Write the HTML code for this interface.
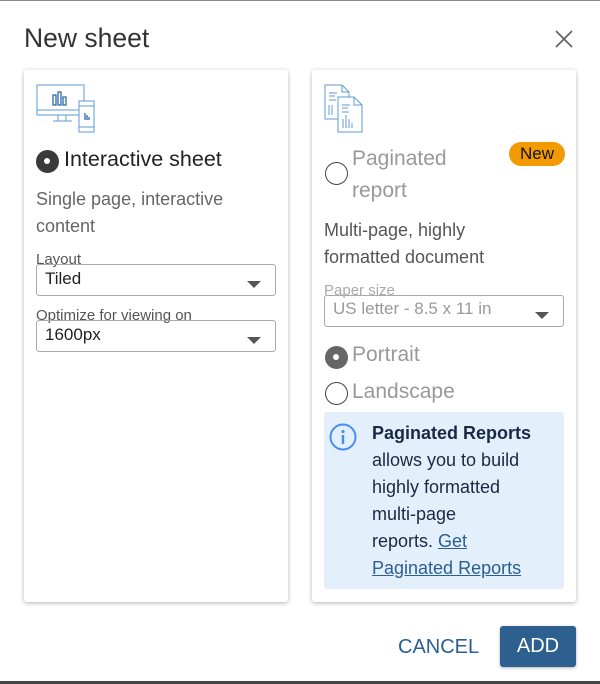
<!DOCTYPE html>
<html><head><style>
*{box-sizing:border-box;margin:0;padding:0}
body{width:600px;height:683px;background:#fff;font-family:"Liberation Sans",sans-serif;position:relative;overflow:hidden;border-top:1px solid #888;color:#333}
.abs{position:absolute}
.card{position:absolute;top:69px;width:264px;height:532px;background:#fff;border-radius:3px;box-shadow:0 1px 4px rgba(0,0,0,.3)}
.radio{position:absolute;width:23px;height:23px;border-radius:50%;border:1.5px solid #444;background:#fff}
.radio.on{background:#3a3a3a;border-color:#3a3a3a}
.radio.on::after{content:"";position:absolute;left:7px;top:7px;width:6px;height:6px;border-radius:50%;background:#fff}
.sel{position:absolute;height:32px;border:1px solid #aaa;border-radius:3px;font-size:17px;padding:4px 8px 0;line-height:20px}
.sel::after{content:"";position:absolute;right:14px;top:16px;border:7px solid transparent;border-top:7px solid #555;border-bottom:0}
.lbl{position:absolute;font-size:15px;color:#555}
</style></head><body>
<div class="abs" style="left:24px;top:22px;font-size:26.5px;color:#333">New sheet</div>
<svg class="abs" style="left:554px;top:28px" width="20" height="20"><path d="M2 2L18 18M18 2L2 18" stroke="#666" stroke-width="1.8"/></svg>

<div class="card" style="left:24px">
 <svg class="abs" style="left:12px;top:13px" width="60" height="50" fill="none" stroke="#5b9bd5" stroke-width="1">
  <rect x="1" y="2" width="47" height="30"/><path d="M1 27H48M22 32V38M30 32V38M17 38H36" />
  <rect x="43" y="18" width="15" height="31" fill="#fff"/><path d="M43 23H58M43 44H58"/>
  <g stroke="#2e6aa8" stroke-width="1.3"><rect x="17" y="12" width="3" height="10"/><rect x="22" y="9" width="3" height="13"/><rect x="27" y="14" width="3" height="8"/><path d="M49 30V37M51 32V37M53 34V37"/></g>
 </svg>
 <div class="radio on" style="left:12px;top:80px"></div>
 <div class="abs" style="left:40px;top:77px;font-size:21.5px;color:#222">Interactive sheet</div>
 <div class="abs" style="left:12px;top:116px;font-size:18px;line-height:27px;color:#666">Single page, interactive<br>content</div>
 <div class="lbl" style="left:12px;top:181px">Layout</div>
 <div class="sel" style="left:12px;top:194px;width:240px;color:#222">Tiled</div>
 <div class="lbl" style="left:12px;top:237px">Optimize for viewing on</div>
 <div class="sel" style="left:12px;top:250px;width:240px;color:#222">1600px</div>
</div>

<div class="card" style="left:312px">
 <svg class="abs" style="left:12px;top:13px" width="42" height="50" fill="none" stroke="#5b9bd5" stroke-width="1">
  <path d="M1 2H18L25 9V36H1Z M18 2V9H25"/><path d="M5 10H13M5 13H11M5 17H12" />
  <path d="M5 32V22M8 32V22" />
  <path d="M14 14H30L38 22V49H14Z M30 14V22H38" fill="#fff"/><path d="M18 22H26M18 25H24M18 29H25"/>
  <path d="M19 45V36M22 45V32M25 45V36M28 45V40"/>
 </svg>
 <div class="abs" style="left:197px;top:72px;width:56px;height:24px;border-radius:12px;background:#f29a00;font-size:17px;color:#111;text-align:center;line-height:24px">New</div>
 <div class="radio" style="left:13px;top:92px"></div>
 <div class="abs" style="left:40px;top:73px;font-size:21px;line-height:32px;color:#999">Paginated<br>report</div>
 <div class="abs" style="left:12px;top:147px;font-size:18px;line-height:27px;color:#555">Multi-page, highly<br>formatted document</div>
 <div class="lbl" style="left:12px;top:212px;color:#aaa">Paper size</div>
 <div class="sel" style="left:12px;top:225px;width:240px;color:#999;padding-top:3px">US letter - 8.5 x 11 in</div>
 <div class="radio on" style="left:13px;top:276px;background:#666;border-color:#666"></div>
 <div class="abs" style="left:40px;top:273px;font-size:21px;color:#999">Portrait</div>
 <div class="radio" style="left:13px;top:312px"></div>
 <div class="abs" style="left:40px;top:310px;font-size:21px;color:#999">Landscape</div>
 <div class="abs" style="left:12px;top:342px;width:240px;height:177px;background:#e3effb;border-radius:3px"></div>
 <svg class="abs" style="left:17px;top:353px" width="28" height="28"><circle cx="14" cy="14" r="12.5" fill="none" stroke="#4a8af4" stroke-width="2"/><circle cx="14" cy="8.5" r="1.6" fill="#4a8af4"/><path d="M14 12V21" stroke="#4a8af4" stroke-width="2.4"/></svg>
 <div class="abs" style="left:60px;top:350px;font-size:18px;line-height:27px;color:#1a2a45"><b>Paginated Reports</b><br>allows you to build<br>highly formatted<br>multi-page<br>reports. <u style="color:#2a5f94">Get<br>Paginated Reports</u></div>
</div>

<div class="abs" style="left:398px;top:635px;font-size:20px;color:#2a5f94">CANCEL</div>
<div class="abs" style="left:500px;top:625px;width:76px;height:41px;background:#2d5f8f;border-radius:3px;color:#fff;font-size:20px;text-align:center;line-height:41px;box-shadow:0 1px 3px rgba(0,0,0,.3)">ADD</div>
<div class="abs" style="left:0;top:680px;width:600px;height:3px;background:#444"></div>
</body></html>
